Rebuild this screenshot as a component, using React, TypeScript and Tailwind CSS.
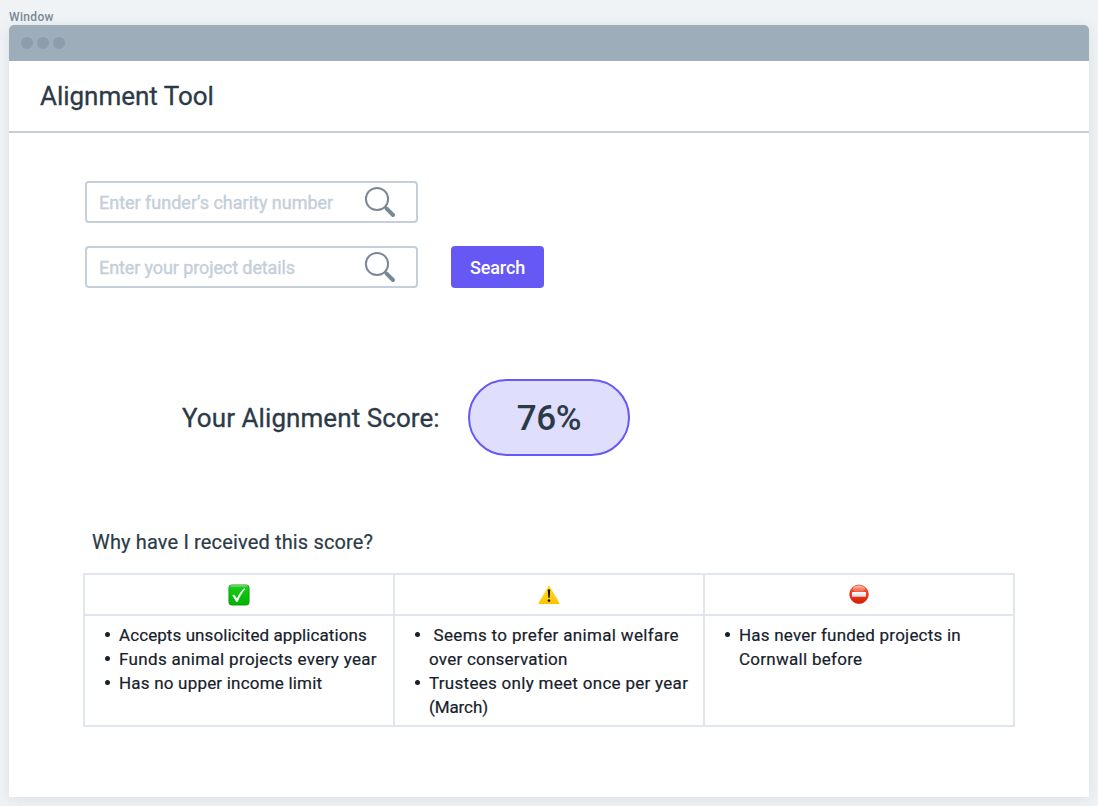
import type { ReactNode } from "react";

type Line = { text: string; tracking: string };
type Reason = { lines: Line[] };

function MagnifierIcon() {
  return (
    <svg className="h-8 w-8 shrink-0" viewBox="0 0 32 32" fill="none" stroke="#788896">
      <circle cx="13" cy="13" r="11.1" strokeWidth="2" />
      <path d="M20.6 20.6 22.6 22.6" strokeWidth="2.6" />
      <path d="M22.6 22.6 29 29" strokeWidth="4" strokeLinecap="round" />
    </svg>
  );
}

function CheckIcon() {
  return (
    <svg className="h-[22px] w-[22px]" viewBox="0 0 22 22">
      <defs>
        <linearGradient id="check-fill" x1="0" y1="0" x2="0" y2="1">
          <stop offset="0" stopColor="#45c93f" />
          <stop offset="0.2" stopColor="#12c912" />
          <stop offset="1" stopColor="#00b400" />
        </linearGradient>
      </defs>
      <rect x="0.9" y="0.9" width="20.2" height="20.2" rx="2.8" fill="url(#check-fill)" stroke="#129312" strokeWidth="0.8" />
      <path d="M3.2 1.9H18.8" stroke="#8be487" strokeWidth="1" strokeLinecap="round" />
      <path d="M4.3 11.6 6.2 10.6 9 14.5C10.6 10.6 13 7 16.3 4.3L17.4 5C14 8.6 11.6 13 9.8 17.8H8.2Z" fill="#fff" />
    </svg>
  );
}

function WarningIcon() {
  return (
    <svg className="h-[22px] w-[22px]" viewBox="0 0 22 22">
      <defs>
        <linearGradient id="warning-fill" x1="0" y1="0" x2="0" y2="1">
          <stop offset="0" stopColor="#ffdc35" />
          <stop offset="1" stopColor="#ffc400" />
        </linearGradient>
      </defs>
      <path d="M11 2.2 20.9 19.3H1.1Z" fill="url(#warning-fill)" stroke="url(#warning-fill)" strokeWidth="1.2" strokeLinejoin="round" />
      <path d="M9.8 6.2C9.8 4.9 12.2 4.9 12.2 6.2L11.7 13.8H10.3Z" fill="#151515" />
      <circle cx="11" cy="16.6" r="1.3" fill="#151515" />
    </svg>
  );
}

function NoEntryIcon() {
  return (
    <svg className="h-[22px] w-[22px]" viewBox="0 0 22 22">
      <defs>
        <linearGradient id="stop-fill" x1="0" y1="0" x2="0" y2="1">
          <stop offset="0" stopColor="#f4603c" />
          <stop offset="0.5" stopColor="#f1391b" />
          <stop offset="1" stopColor="#d61b04" />
        </linearGradient>
        <linearGradient id="stop-gloss" x1="0" y1="0" x2="0" y2="1">
          <stop offset="0" stopColor="#ffd0be" stopOpacity="0.9" />
          <stop offset="1" stopColor="#ff7f62" stopOpacity="0.3" />
        </linearGradient>
        <linearGradient id="stop-bar" x1="0" y1="0" x2="0" y2="1">
          <stop offset="0" stopColor="#ffffff" />
          <stop offset="1" stopColor="#d5d8dc" />
        </linearGradient>
      </defs>
      <circle cx="11" cy="10.3" r="9.3" fill="url(#stop-fill)" stroke="#d42a10" strokeWidth="0.7" />
      <ellipse cx="11" cy="5" rx="6.3" ry="3.5" fill="url(#stop-gloss)" />
      <rect x="4" y="7.9" width="14" height="4.8" rx="0.5" fill="url(#stop-bar)" />
    </svg>
  );
}

function SearchField({ text, tracking }: Line) {
  return (
    <div className="flex h-[42px] w-[333px] items-center justify-between rounded-[4px] border-2 border-[#c4cfda] bg-white pr-5 pl-3">
      <span className={`relative top-px text-[18px] leading-6 whitespace-nowrap text-[#c4cfda] [-webkit-text-stroke:0.4px_#c4cfda] ${tracking}`}>{text}</span>
      <MagnifierIcon />
    </div>
  );
}

function ReasonColumn({ icon, reasons }: { icon: ReactNode; reasons: Reason[] }) {
  return (
    <div className="flex flex-col border-r-2 border-[#e0e5ee]">
      <div className="flex h-[41px] items-center justify-center border-b-2 border-[#e0e5ee] pt-px pr-px">{icon}</div>
      <ul className="h-[109px] pt-[7px] pl-5">
        {reasons.map((reason) => (
          <li key={reason.lines[0].text} className="flex text-[17px] leading-6 text-[#17212b] [-webkit-text-stroke:0.2px_#17212b]">
            <span className="mt-[9px] mr-[9px] h-[5px] w-[5px] shrink-0 rounded-full bg-[#17212b]" />
            <span className="flex flex-col">
              {reason.lines.map((line) => (
                <span key={line.text} className={`whitespace-pre ${line.tracking}`}>{line.text}</span>
              ))}
            </span>
          </li>
        ))}
      </ul>
    </div>
  );
}

const positives: Reason[] = [
  { lines: [{ text: "Accepts unsolicited applications", tracking: "tracking-[0.08px]" }] },
  { lines: [{ text: "Funds animal projects every year", tracking: "tracking-[0.33px]" }] },
  { lines: [{ text: "Has no upper income limit", tracking: "tracking-[0.2px]" }] },
];

const warnings: Reason[] = [
  {
    lines: [
      { text: " Seems to prefer animal welfare", tracking: "tracking-[0.34px]" },
      { text: "over conservation", tracking: "tracking-[0.24px]" },
    ],
  },
  {
    lines: [
      { text: "Trustees only meet once per year", tracking: "tracking-[0.29px]" },
      { text: "(March)", tracking: "tracking-[-0.1px]" },
    ],
  },
];

const blockers: Reason[] = [
  {
    lines: [
      { text: "Has never funded projects in", tracking: "tracking-[0.22px]" },
      { text: "Cornwall before", tracking: "tracking-[0.28px]" },
    ],
  },
];

export default function App() {
  return (
    <div className="h-[806px] overflow-hidden bg-[#eff3f6] px-[9px] font-['Roboto',sans-serif] text-[#2c3a47]">
      <div className="h-[25px] pt-2 text-[12px] leading-[18px] font-medium tracking-[0.35px] text-[#788896]">Window</div>
      <main className="h-[772px] rounded-t-[5px] bg-white shadow-[0_2px_14px_rgba(50,60,60,0.1)]">
        <div className="flex h-9 items-center gap-1 rounded-t-[5px] bg-[#9eadba] px-3">
          <span className="h-3 w-3 rounded-full bg-[#8d9dab]" />
          <span className="h-3 w-3 rounded-full bg-[#8d9dab]" />
          <span className="h-3 w-3 rounded-full bg-[#8d9dab]" />
        </div>
        <header className="flex h-[72px] items-center border-b-2 border-[#c4cfda] pl-[31px]">
          <h1 className="text-[26px] leading-8 font-normal tracking-[-0.03px] [-webkit-text-stroke:0.3px_#2c3a47]">Alignment Tool</h1>
        </header>

        <section className="flex items-end gap-[33px] pt-12 pl-[76px]">
          <div className="flex flex-col gap-[23px]">
            <SearchField text="Enter funder’s charity number" tracking="tracking-[-0.01px]" />
            <SearchField text="Enter your project details" tracking="tracking-[-0.1px]" />
          </div>
          <button className="h-[42px] w-[93px] rounded-[4px] bg-[#6558f5] pt-0.5 text-[18px] leading-6 font-medium tracking-[-0.14px] text-white">Search</button>
        </section>

        <section className="mt-[91px] flex items-center pl-[173px]">
          <h2 className="w-[286px] text-[26px] leading-8 font-normal tracking-[0.07px] whitespace-nowrap [-webkit-text-stroke:0.3px_#2c3a47]">Your Alignment Score:</h2>
          <div className="flex h-[77px] w-[162px] items-center justify-center rounded-[38.5px] border-2 border-[#6558f5] bg-[#e0defd] pt-0.5 text-[35px] leading-none font-medium tracking-[-0.3px]">
            76%
          </div>
        </section>

        <section className="pt-[74px] pl-[74px]">
          <h3 className="pl-[9px] text-[20px] leading-6 font-normal tracking-[0.15px] [-webkit-text-stroke:0.2px_#2c3a47]">Why have I received this score?</h3>
          <div className="mt-[19px] grid w-[932px] grid-cols-3 border-y-2 border-l-2 border-[#e0e5ee]">
            <ReasonColumn icon={<CheckIcon />} reasons={positives} />
            <ReasonColumn icon={<WarningIcon />} reasons={warnings} />
            <ReasonColumn icon={<NoEntryIcon />} reasons={blockers} />
          </div>
        </section>
      </main>
    </div>
  );
}
